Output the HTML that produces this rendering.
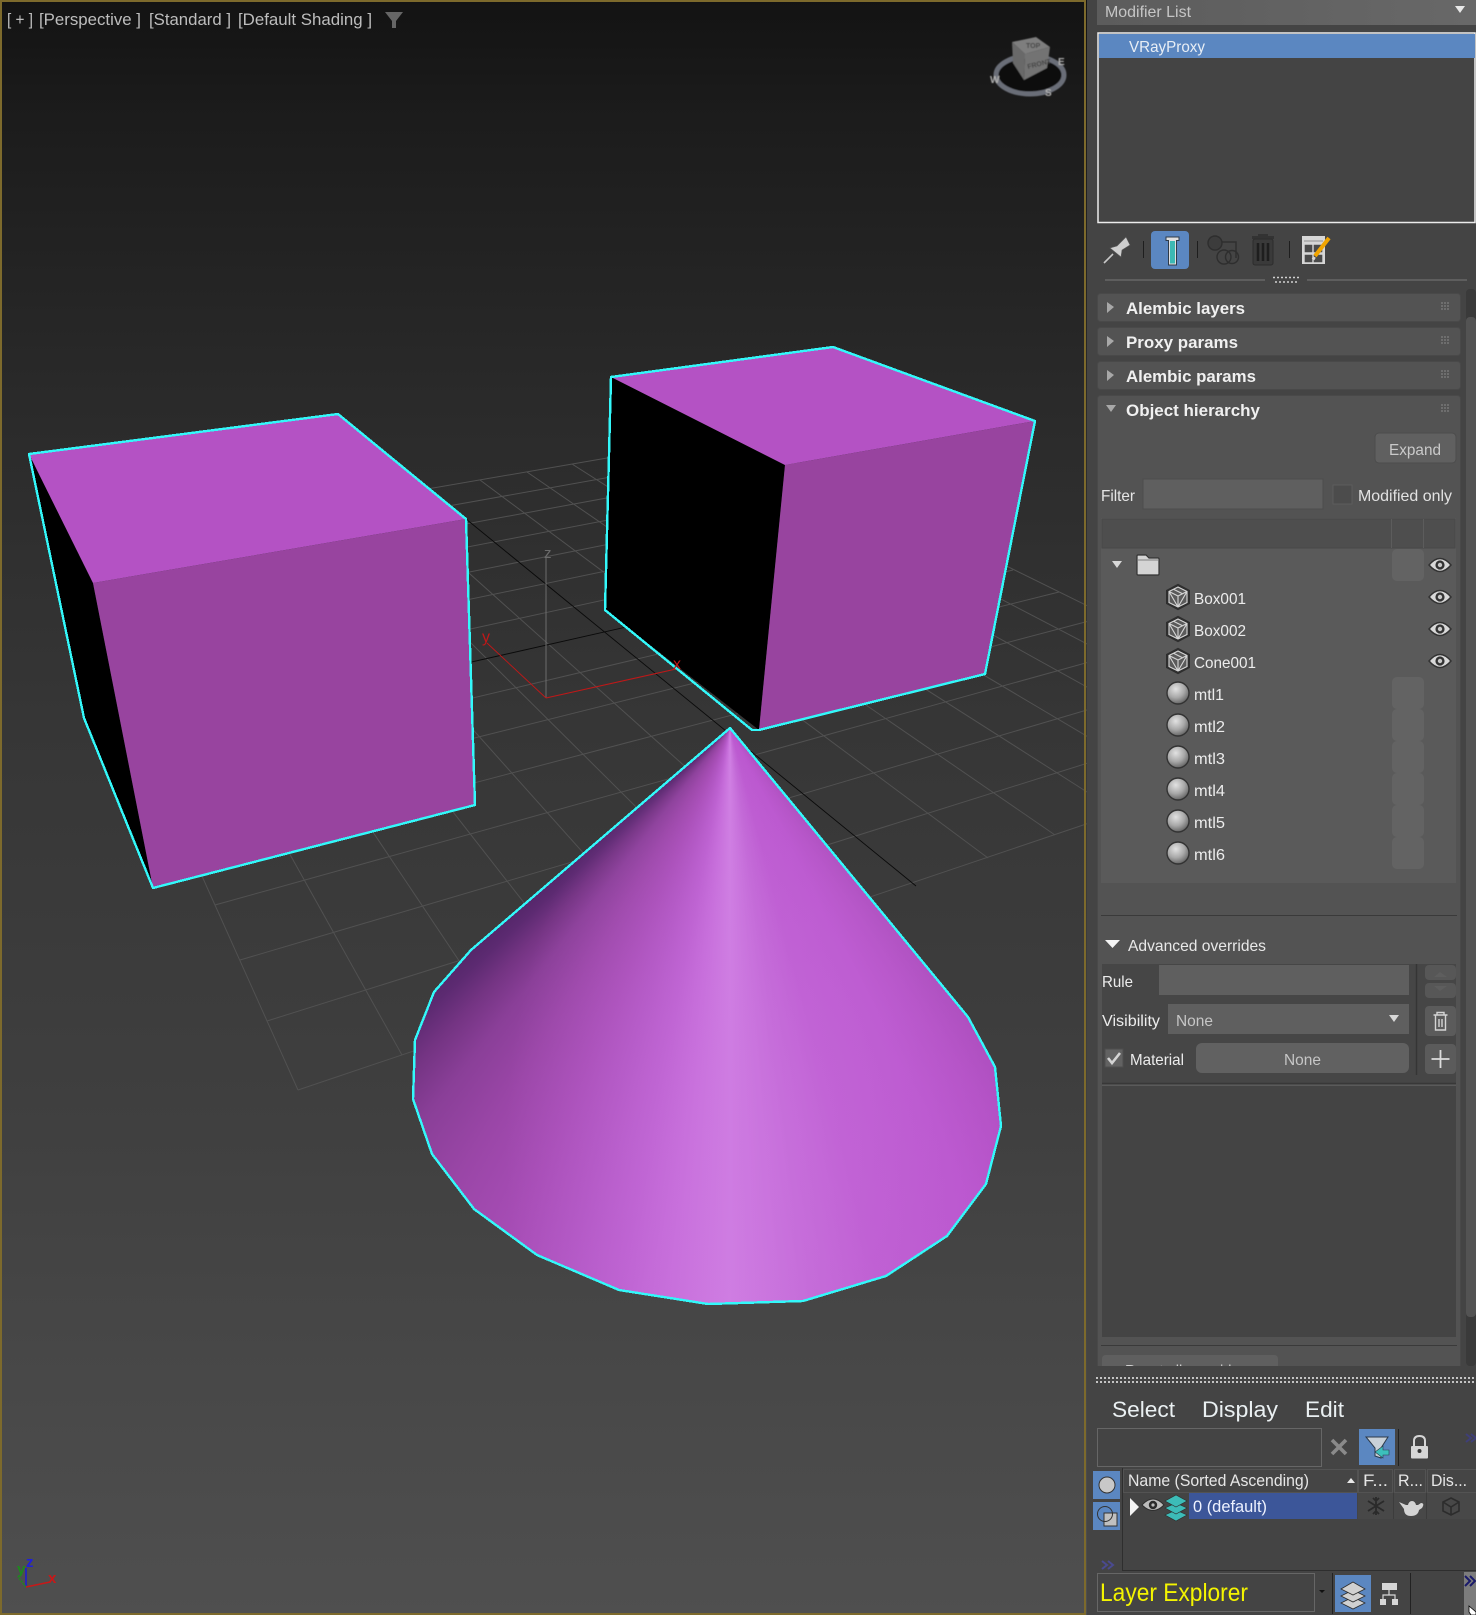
<!DOCTYPE html>
<html><head><meta charset="utf-8"><title>Viewport</title>
<style>
html,body{margin:0;padding:0;background:#444;}
body{width:1476px;height:1615px;position:relative;overflow:hidden;font-family:"Liberation Sans",sans-serif;}
.l{position:absolute;left:0;top:0;width:1476px;height:1615px;}
#bg{background:linear-gradient(180deg,#131313 0,#1c1c1c 120px,#2a2a2a 400px,#363636 720px,#3f3f3f 1100px,#474747 1350px,#4f4f4f 1615px);}
#cone{background:
 radial-gradient(ellipse 250px 440px at 755px 1150px,rgba(204,118,224,.5),rgba(204,118,224,0)),
 conic-gradient(from 0deg at 730px 728px,#a94cba 0deg,#a94cba 138deg,#b452c6 146deg,#ba56ce 153deg,#bc5ad0 165deg,#c268d6 172deg,#d080e3 180deg,#c66dda 186deg,#bb5fcf 191deg,#b055c2 197deg,#a74db6 203deg,#9a46a7 211deg,#8a3f98 218deg,#743483 223deg,#5c2a71 227deg,#4d2363 232deg,#4d2363 360deg);
 clip-path:polygon(730px 728px,471px 950px,434px 992px,415px 1040px,413px 1099px,432px 1154px,474px 1209px,537px 1255px,619px 1290px,708px 1304px,803px 1301px,886px 1276px,947px 1236px,986px 1184px,1001px 1126px,995px 1067px,968px 1017px);}
svg{display:block;}
text{font-family:"Liberation Sans",sans-serif;}
</style></head><body>
<div class="l" id="bg"></div>
<svg class="l" width="1476" height="1615" viewBox="0 0 1476 1615">
 <g stroke="#515151" stroke-width="1" fill="none">
  <path d="M298 1090L57 553M402 1055L116 543M500 1022L173 533M593 991L228 524M680 961L281 515M763 933L333 506M842 907L384 497M988 858L480 480M1055 835L527 472M1120 813L572 464M1181 792L616 457M1240 772L658 449M1296 753L700 442M1350 735L740 435"/>
  <path d="M298 1090L1350 735M267 1021L1282 702M240 960L1219 671M215 905L1161 642M193 857L1108 616M174 813L1059 592M156 773L1013 570M125 704L931 529M111 674L894 511M99 646L860 494M87 620L827 478M76 596L796 463M67 574L768 449M57 553L740 435"/>
 </g>
 <path d="M466 519L916 886M140 737L971 549" stroke="#0a0a0a" stroke-width=".9" fill="none"/>
 <path d="M546 698V558" stroke="#6c6c6c" fill="none"/>
 <path d="M546 698L487 643" stroke="#c01818" stroke-width=".9" fill="none"/>
 <path d="M546 698L676 669" stroke="#c01818" stroke-width="1.100" fill="none"/>
 <text x="544" y="558" font-size="15" fill="#6c6c6c">z</text>
 <text x="482" y="642" font-size="16" fill="#c01818">y</text>
 <polygon points="29,454 93,583 153,888 84,718" fill="#000"/>
 <polygon points="29,454 338,414 466,519 93,583" fill="#b452c4"/>
 <polygon points="93,583 466,519 475,805 153,888" fill="#98449f"/>
 <polygon points="611,377 785,465 759,730 605,610" fill="#000"/>
 <polygon points="611,377 833,347 1035,421 785,465" fill="#b452c4"/>
 <polygon points="785,465 1035,421 985,674 759,730" fill="#98449f"/>
</svg>
<div class="l" id="cone"></div>
<svg class="l" width="1476" height="1615" viewBox="0 0 1476 1615">
 <defs>
  <radialGradient id="sph" cx="40%" cy="32%" r="72%"><stop offset="0" stop-color="#e2e2e2"/><stop offset=".55" stop-color="#a8a8a8"/><stop offset="1" stop-color="#5e5e5e"/></radialGradient>
  <pattern id="dt" width="3" height="3" patternUnits="userSpaceOnUse"><rect width="2" height="2" fill="#6e6e6e"/></pattern>
  <filter id="bl" x="-10%" y="-10%" width="120%" height="120%"><feGaussianBlur stdDeviation=".6"/></filter>
  <g id="eye"><path d="M-11 0Q0-13 11 0Q0 13-11 0Z" fill="#d8d8d8" stroke="#333" stroke-width="1.500"/><circle r="4.600" fill="#333"/><circle r="2.200" fill="#c8c8c8"/></g>
  <g id="box"><path d="M0-11.500L10.500-6V6L0 11.500L-10.500 6V-6Z" fill="#5a5a5a" stroke="#2e2e2e" stroke-width="3"/><path d="M0-10L9-5.500V5.500L0 10L-9 5.500V-5.500ZM-9-5.500L0-1L9-5.500M0-1L0 10M-9-5.500L0 10M9-5.500L0 10M-4.500-7.800L4.500-3.200" fill="none" stroke="#d4d4d4" stroke-width="1.150"/></g>
  <g id="sp"><circle r="11" fill="url(#sph)" stroke="#333" stroke-width="1.400"/></g>
  <g id="dots"><rect width="9" height="9" fill="url(#dt)"/></g>
 </defs>

 <!-- selection outlines -->
 <g fill="none" stroke="#33f8fa" stroke-width="2.400" stroke-linejoin="round" shape-rendering="crispEdges">
  <polygon points="29,454 338,414 466,519 475,805 153,888 84,718"/>
  <polygon points="611,377 833,347 1035,421 985,674 759,730 752,730 605,610"/>
  <polygon points="730,728 471,950 434,992 415,1040 413,1099 432,1154 474,1209 537,1255 619,1290 708,1304 803,1301 886,1276 947,1236 986,1184 1001,1126 995,1067 968,1017"/>
 </g>
 <text x="673" y="669" font-size="16" fill="#c01818">x</text>

 <!-- viewport labels -->
 <g font-size="16.500" fill="#bdbdbd">
  <text x="7" y="25" textLength="26" lengthAdjust="spacingAndGlyphs">[ + ]</text>
  <text x="39" y="25" textLength="102" lengthAdjust="spacingAndGlyphs">[Perspective ]</text>
  <text x="149" y="25" textLength="82" lengthAdjust="spacingAndGlyphs">[Standard ]</text>
  <text x="238" y="25" textLength="134" lengthAdjust="spacingAndGlyphs">[Default Shading ]</text>
 </g>
 <path d="M385 12H403L396 21V28L392 28V21Z" fill="#666"/>

 <!-- view cube -->
 <g filter="url(#bl)">
 <ellipse cx="1030" cy="75" rx="34" ry="19" fill="#0d0d0d" stroke="#6a6e78" stroke-width="5"/>
 <polygon points="1012,42 1036,37 1050,47 1025,54" fill="#7e7e7e"/>
 <polygon points="1025,54 1050,47 1047,68 1024,80" fill="#737373"/>
 <polygon points="1012,42 1025,54 1024,80 1013,63" fill="#696969"/>
 <g font-size="7" fill="#444" font-weight="bold"><text x="1028" y="69" transform="rotate(-14 1028 69)">FRONT</text><text x="1026" y="48">TOP</text></g>
 <g font-size="10" fill="#b0b0b0" font-weight="bold"><text x="990" y="83">W</text><text x="1045" y="96">S</text><text x="1058" y="65">E</text></g>
 </g>

 <!-- tripod -->
 <path d="M26 1587V1568" stroke="#1a1ad8" stroke-width="1.500"/>
 <path d="M26 1587L18 1577" stroke="#1d8a1d" stroke-width="1.500" stroke-dasharray="2 1"/>
 <path d="M26 1587L50 1582" stroke="#c81818" stroke-width="1.500"/>
 <text x="26" y="1567" font-size="15" font-weight="bold" fill="#2020d8">z</text>
 <text x="17" y="1574" font-size="15" font-weight="bold" fill="#1d8a1d">y</text>
 <text x="48" y="1583" font-size="15" font-weight="bold" fill="#c81818">x</text>

 <!-- viewport border -->
 <path d="M1 1V1614H1085V1H1Z" fill="none" stroke="#7d6a2c" stroke-width="2"/>

 <!-- right panel -->
 <rect x="1087" y="0" width="389" height="1615" fill="#444"/>
 <defs><linearGradient id="ml" x1="0" x2="1"><stop offset="0" stop-color="#5c5c5c"/><stop offset="1" stop-color="#686868"/></linearGradient></defs>
 <rect x="1097" y="0" width="379" height="25" fill="url(#ml)"/>
 <text x="1105" y="17" font-size="16" fill="#c6c6c6" textLength="86" lengthAdjust="spacingAndGlyphs">Modifier List</text>
 <path d="M1455 6H1465L1460 13Z" fill="#e8e8e8"/>
 <rect x="1098" y="33" width="377" height="189.500" fill="#444" stroke="#ececec" stroke-width="1.500"/>
 <rect x="1099" y="34" width="376" height="24" fill="#5b87c1"/>
 <text x="1129" y="52" font-size="16" fill="#e8eef5" textLength="76" lengthAdjust="spacingAndGlyphs">VRayProxy</text>

 <!-- modifier toolbar -->
 <path d="M1104 263L1113 254" stroke="#c8c8c8" stroke-width="1.600"/>
 <path d="M1126 237L1130 245L1122 250L1121 257L1110 248L1117 246Z" fill="#cfcfcf" stroke="#5a5a5a" stroke-width=".6"/>
 <path d="M1143.500 241V258M1197.500 241V258M1289.500 241V258" stroke="#1e1e1e" stroke-width="1"/>
 <rect x="1151" y="231" width="38" height="38" rx="4" fill="#5b87c1"/>
 <path d="M1166 237H1179V240.500H1176.500V265H1168.500V240.500H1166Z" fill="#e0e0e0" stroke="#2e3a48" stroke-width="1"/>
 <rect x="1170" y="241" width="5" height="22.500" fill="#3cb8b4"/>
 <g fill="none" stroke="#2e2e2e" stroke-width="1.400"><circle cx="1215" cy="243" r="7" fill="#3c3c3c"/><path d="M1222 242H1236V258"/><circle cx="1224" cy="257" r="7"/><circle cx="1232" cy="257" r="6.500"/></g>
 <g><rect x="1252" y="236" width="22" height="3" fill="#333"/><rect x="1258" y="234" width="10" height="3" fill="#333"/><rect x="1253" y="239" width="20" height="26" rx="2" fill="#3a3a3a" stroke="#2c2c2c"/><path d="M1258 243V261M1263 243V261M1268 243V261" stroke="#1e1e1e" stroke-width="2.600"/></g>
 <rect x="1302" y="236" width="23" height="28" fill="#d6d6d6"/>
 <path d="M1304 241H1323M1305 245H1312V252H1305ZM1314 245H1322V252H1314ZM1305 255H1312V262H1305ZM1314 255H1322V262H1314Z" fill="#4a4a4a" stroke="#4a4a4a" stroke-width=".6"/>
 <path d="M1315 256L1329 238" stroke="#f0a400" stroke-width="4" fill="none"/>
 <path d="M1314.500 257L1313 259.500" stroke="#d8d8d8" stroke-width="3"/>

 <!-- divider -->
 <path d="M1105 280H1265M1307 280H1467" stroke="#5e5e5e" stroke-width="2"/>
 <path d="M1273 277.500H1299M1275 282H1298" stroke="#d0d0d0" stroke-width="1.600" stroke-dasharray="2 2"/>

 <!-- scrollbar -->
 <rect x="1466" y="289" width="10" height="1077" rx="4" fill="#3a3a3a"/>
 <rect x="1466" y="317" width="10" height="1000" rx="4" fill="#535353"/>

 <!-- rollouts -->
 <g fill="#535353" stroke="#494949" stroke-width="1">
  <rect x="1097.500" y="293.500" width="363" height="28" rx="3"/>
  <rect x="1097.500" y="327.500" width="363" height="28" rx="3"/>
  <rect x="1097.500" y="361.500" width="363" height="28" rx="3"/>
  <rect x="1097.500" y="395.500" width="363" height="1000" rx="3"/>
 </g>
 <g fill="#a8a8a8"><path d="M1107 302L1114 307L1107 313Z"/><path d="M1107 336L1114 341L1107 347Z"/><path d="M1107 370L1114 375L1107 381Z"/><path d="M1106 405H1116L1111 412Z"/></g>
 <use href="#dots" x="1441" y="302"/><use href="#dots" x="1441" y="336"/><use href="#dots" x="1441" y="370"/><use href="#dots" x="1441" y="404"/>
 <g font-size="16.500" font-weight="bold" fill="#f0f0f0">
  <text x="1126" y="314" textLength="119" lengthAdjust="spacingAndGlyphs">Alembic layers</text>
  <text x="1126" y="348" textLength="112" lengthAdjust="spacingAndGlyphs">Proxy params</text>
  <text x="1126" y="382" textLength="130" lengthAdjust="spacingAndGlyphs">Alembic params</text>
  <text x="1126" y="416" textLength="134" lengthAdjust="spacingAndGlyphs">Object hierarchy</text>
 </g>

 <!-- Object hierarchy top -->
 <rect x="1375" y="433" width="81" height="30" rx="4" fill="#606060" stroke="#4c4c4c"/>
 <text x="1389" y="455" font-size="16" fill="#cacaca" textLength="52" lengthAdjust="spacingAndGlyphs">Expand</text>
 <text x="1101" y="501" font-size="16" fill="#e6e6e6" textLength="34" lengthAdjust="spacingAndGlyphs">Filter</text>
 <rect x="1143" y="479" width="180" height="30" fill="#5f5f5f" stroke="#4c4c4c"/>
 <rect x="1333" y="485" width="19" height="19" fill="#4c4c4c" stroke="#5c5c5c"/>
 <text x="1358" y="501" font-size="16" fill="#e2e2e2" textLength="94" lengthAdjust="spacingAndGlyphs">Modified only</text>

 <!-- tree -->
 <rect x="1101" y="518" width="355" height="365" fill="#5a5a5a"/>
 <rect x="1102" y="519" width="353" height="29" fill="#4e4e4e" stroke="#484848"/>
 <path d="M1391.500 519V548M1423.500 519V548" stroke="#5c5c5c"/>
 <g fill="#636363">
  <rect x="1392" y="549" width="32" height="32" rx="5"/>
  <rect x="1392" y="677" width="32" height="32" rx="5"/>
  <rect x="1392" y="709" width="32" height="32" rx="5"/>
  <rect x="1392" y="741" width="32" height="32" rx="5"/>
  <rect x="1392" y="773" width="32" height="32" rx="5"/>
  <rect x="1392" y="805" width="32" height="32" rx="5"/>
  <rect x="1392" y="837" width="32" height="32" rx="5"/>
 </g>
 <path d="M1112 561H1122L1117 568Z" fill="#d8d8d8"/>
 <path d="M1137 556Q1137 555 1138 555H1146L1149 558H1158Q1159 558 1159 559V574Q1159 575 1158 575H1138Q1137 575 1137 574Z" fill="#d4d4d4" stroke="#333" stroke-width="1.200"/>
 <path d="M1138 560H1158" stroke="#666" stroke-width=".8"/>
 <use href="#eye" x="1440" y="565"/><use href="#eye" x="1440" y="597"/><use href="#eye" x="1440" y="629"/><use href="#eye" x="1440" y="661"/>
 <use href="#box" x="1178" y="597"/><use href="#box" x="1178" y="629"/><use href="#box" x="1178" y="661"/>
 <use href="#sp" x="1178" y="693"/><use href="#sp" x="1178" y="725"/><use href="#sp" x="1178" y="757"/><use href="#sp" x="1178" y="789"/><use href="#sp" x="1178" y="821"/><use href="#sp" x="1178" y="853"/>
 <g font-size="16" fill="#ececec">
  <text x="1194" y="604" textLength="52" lengthAdjust="spacingAndGlyphs">Box001</text>
  <text x="1194" y="636" textLength="52" lengthAdjust="spacingAndGlyphs">Box002</text>
  <text x="1194" y="668" textLength="62" lengthAdjust="spacingAndGlyphs">Cone001</text>
  <text x="1194" y="700" textLength="30" lengthAdjust="spacingAndGlyphs">mtl1</text>
  <text x="1194" y="732" textLength="31" lengthAdjust="spacingAndGlyphs">mtl2</text>
  <text x="1194" y="764" textLength="31" lengthAdjust="spacingAndGlyphs">mtl3</text>
  <text x="1194" y="796" textLength="31" lengthAdjust="spacingAndGlyphs">mtl4</text>
  <text x="1194" y="828" textLength="31" lengthAdjust="spacingAndGlyphs">mtl5</text>
  <text x="1194" y="860" textLength="31" lengthAdjust="spacingAndGlyphs">mtl6</text>
 </g>

 <!-- advanced overrides -->
 <path d="M1101 915.500H1457" stroke="#3a3a3a"/>
 <path d="M1105 940H1120L1112.500 948Z" fill="#f4f4f4"/>
 <text x="1128" y="951" font-size="16" fill="#e8e8e8" textLength="138" lengthAdjust="spacingAndGlyphs">Advanced overrides</text>
 <rect x="1102" y="964" width="354" height="119" fill="#464646"/>
 <text x="1102" y="987" font-size="16" fill="#ececec" textLength="31" lengthAdjust="spacingAndGlyphs">Rule</text>
 <rect x="1159" y="965" width="250" height="30" fill="#5f5f5f"/>
 <path d="M1416.500 964V1075" stroke="#353535" stroke-width="1.500"/>
 <rect x="1425" y="965" width="31" height="15" rx="4" fill="#575757"/><rect x="1425" y="983" width="31" height="15" rx="4" fill="#575757"/>
 <path d="M1434 977L1440 972L1447 977ZM1434 986L1440 991L1447 986Z" fill="#5e5e5e"/>
 <text x="1102" y="1026" font-size="16" fill="#ececec" textLength="58" lengthAdjust="spacingAndGlyphs">Visibility</text>
 <rect x="1168" y="1004" width="241" height="30" fill="#5f5f5f"/>
 <text x="1176" y="1026" font-size="16" fill="#c6c6c6" textLength="37" lengthAdjust="spacingAndGlyphs">None</text>
 <path d="M1389 1015H1399L1394 1022Z" fill="#d8d8d8"/>
 <rect x="1425" y="1006" width="31" height="30" rx="4" fill="#5b5b5b"/>
 <g fill="none" stroke="#d4d4d4" stroke-width="1.400"><path d="M1433.500 1015H1447.500M1437 1015V1012.500H1444V1015M1435.500 1015V1030H1445.500V1015M1439 1019V1027M1442 1019V1027"/></g>
 <rect x="1105" y="1049" width="18" height="18" fill="#626262" stroke="#4e4e4e"/>
 <path d="M1108 1058L1112 1063L1120 1053" fill="none" stroke="#d4d4d4" stroke-width="2.600"/>
 <text x="1130" y="1065" font-size="16" fill="#ececec" textLength="54" lengthAdjust="spacingAndGlyphs">Material</text>
 <rect x="1196" y="1043" width="213" height="30" rx="6" fill="#616161"/>
 <text x="1284" y="1065" font-size="16" fill="#c6c6c6" textLength="37" lengthAdjust="spacingAndGlyphs">None</text>
 <rect x="1425" y="1044" width="31" height="30" rx="4" fill="#5b5b5b"/>
 <path d="M1440.500 1050V1068M1431.500 1059H1449.500" stroke="#dcdcdc" stroke-width="1.800"/>
 <path d="M1102 1083.500H1456" stroke="#383838" stroke-width="1.500"/>
 <path d="M1102 1085.500H1456" stroke="#5a5a5a"/>
 <rect x="1102" y="1086" width="354" height="251" fill="#444"/>
 <path d="M1101 1345.500H1457" stroke="#3a3a3a"/>
 <path d="M1102 1366V1359Q1102 1355 1106 1355H1274Q1278 1355 1278 1359V1366Z" fill="#5f5f5f"/>
 <text x="1125" y="1376" font-size="16" fill="#d0d0d0" textLength="122" lengthAdjust="spacingAndGlyphs">Reset all overrides</text>
 <rect x="1087" y="1366" width="389" height="249" fill="#444"/>

 <!-- layer explorer -->
 <path d="M1096 1378H1476M1096 1382H1476" stroke="#c4c4c4" stroke-width="2" stroke-dasharray="2 2"/>
 <g font-size="22" fill="#eaf0f2">
  <text x="1112" y="1417" textLength="63" lengthAdjust="spacingAndGlyphs">Select</text>
  <text x="1202" y="1417" textLength="76" lengthAdjust="spacingAndGlyphs">Display</text>
  <text x="1305" y="1417" textLength="39" lengthAdjust="spacingAndGlyphs">Edit</text>
 </g>
 <rect x="1097.500" y="1428.500" width="224" height="38" fill="#444" stroke="#666"/>
 <path d="M1332 1440L1346 1454M1346 1440L1332 1454" stroke="#8a8a8a" stroke-width="3.600"/>
 <rect x="1359" y="1429" width="36" height="36" fill="#5b87c1"/>
 <path d="M1366 1437H1388L1381 1448V1458L1375 1456V1448Z" fill="#c8d0d8" stroke="#2c3a4a"/>
 <path d="M1375 1452L1383 1446V1450H1389V1455H1383V1458Z" fill="#3cc0bc" stroke="#2c3a4a" stroke-width=".6"/>
 <path d="M1398.500 1429V1466" stroke="#222" stroke-width="1"/>
 <rect x="1411" y="1446" width="17" height="12.500" rx="1" fill="#d6d6d6"/>
 <path d="M1414 1446V1441Q1414 1436 1419.500 1436Q1425 1436 1425 1441V1446" fill="none" stroke="#d6d6d6" stroke-width="2"/>
 <circle cx="1419.500" cy="1451" r="2" fill="#333"/>
 <path d="M1466 1434L1471 1438L1466 1442M1471 1434L1476 1438L1471 1442" fill="none" stroke="#3f3f78" stroke-width="2"/>
 <rect x="1093" y="1471" width="27" height="28" fill="#5b87c1"/><circle cx="1107" cy="1485" r="8" fill="#c8c8c8" stroke="#333"/>
 <rect x="1093" y="1502" width="27" height="28" fill="#5b87c1"/><rect x="1104" y="1513" width="13" height="13" fill="#c0c0c0" stroke="#333"/><circle cx="1105" cy="1514" r="7.500" fill="none" stroke="#333"/>
 <path d="M1122.500 1468V1570.500H1476" fill="none" stroke="#2e2e2e" stroke-width="1"/>
 <g fill="#454545" stroke="#535353"><rect x="1123.500" y="1469.500" width="234" height="23"/><rect x="1358.500" y="1469.500" width="34" height="23"/><rect x="1394.500" y="1469.500" width="31" height="23"/><rect x="1427.500" y="1469.500" width="49" height="23"/></g>
 <g font-size="16.500" fill="#e6e6e6">
  <text x="1128" y="1486" textLength="181" lengthAdjust="spacingAndGlyphs">Name (Sorted Ascending)</text>
  <text x="1363" y="1486" textLength="25" lengthAdjust="spacingAndGlyphs">F...</text>
  <text x="1398" y="1486" textLength="25" lengthAdjust="spacingAndGlyphs">R...</text>
  <text x="1431" y="1486" textLength="36" lengthAdjust="spacingAndGlyphs">Dis...</text>
 </g>
 <path d="M1347 1483H1355L1351 1478Z" fill="#e8e8e8"/>
 <rect x="1358" y="1493" width="118" height="26" fill="#484848"/>
 <path d="M1393.500 1493V1519M1426.500 1493V1519" stroke="#3c3c3c"/>
 <rect x="1189" y="1493" width="168" height="26" fill="#3c5699"/>
 <text x="1193" y="1512" font-size="17" fill="#eef2ff" textLength="74" lengthAdjust="spacingAndGlyphs">0 (default)</text>
 <path d="M1130 1498L1139 1507L1130 1516Z" fill="#f4f4f4"/>
 <g transform="translate(1153 1505)"><path d="M-11 0Q0-12 11 0Q0 11-11 0Z" fill="#bcbcbc" stroke="#2e2e2e"/><circle r="4.200" fill="#2c2c2c"/><circle r="1.600" fill="#bcbcbc"/></g>
 <g fill="#3cbcb8" stroke="#2c2c2c" stroke-width=".6"><path d="M1176 1510L1187 1515L1176 1521L1165 1515Z"/><path d="M1176 1503L1187 1508L1176 1514L1165 1508Z"/><path d="M1176 1495L1187 1501L1176 1507L1165 1501Z"/></g>
 <g stroke="#2a2a2a" stroke-width="1.800" fill="none"><path d="M1376 1497V1515M1368 1501L1384 1511M1384 1501L1368 1511M1373 1498L1376 1501L1379 1498M1373 1514L1376 1511L1379 1514"/></g>
 <path d="M1399 1502L1406 1505H1408Q1409 1501 1412 1501Q1415 1501 1416 1505H1418L1421 1503Q1425 1503 1422 1508L1419 1510Q1418 1516 1411 1516Q1404 1516 1404 1509Z" fill="#d4d4d4"/>
 <path d="M1451 1498L1459 1502V1511L1451 1515L1443 1511V1502ZM1443 1502L1451 1507L1459 1502M1451 1507V1515" fill="none" stroke="#2c2c2c" stroke-width="1.600"/>
 <path d="M1102 1561L1107 1565L1102 1569M1108 1561L1113 1565L1108 1569" fill="none" stroke="#4a4a90" stroke-width="2"/>
 <rect x="1097.500" y="1573.500" width="217" height="38" fill="#444" stroke="#666"/>
 <text x="1100" y="1601" font-size="25" fill="#f4f400" textLength="148" lengthAdjust="spacingAndGlyphs">Layer Explorer</text>
 <path d="M1319 1590H1325L1322 1593Z" fill="#111"/>
 <path d="M1332.500 1573V1614M1410.500 1573V1614" stroke="#222"/>
 <rect x="1335" y="1575" width="36" height="37" fill="#5b87c1"/>
 <g fill="#d0d0d0" stroke="#2c2c2c" stroke-width=".8"><path d="M1353 1597L1365 1603L1353 1609L1341 1603Z"/><path d="M1353 1590L1365 1596L1353 1602L1341 1596Z"/><path d="M1353 1582L1365 1589L1353 1595L1341 1589Z"/></g>
 <g fill="#d6d6d6"><rect x="1382" y="1583" width="15" height="7"/><rect x="1380" y="1599" width="6" height="6"/><rect x="1392" y="1599" width="6" height="6"/></g>
 <path d="M1389 1590V1595M1383 1599V1595H1395V1599" fill="none" stroke="#d6d6d6" stroke-width="1.200"/>
 <rect x="1464" y="1572" width="12" height="43" fill="#7c7c7c"/>
 <path d="M1465 1576L1470 1581L1465 1586M1470 1576L1475 1581L1470 1586" fill="none" stroke="#1a1a6a" stroke-width="2"/>
 <path d="M1469 1606L1476 1612V1615H1471L1469 1612Z" fill="#fff" stroke="#000" stroke-width=".8"/>
</svg>
</body></html>
